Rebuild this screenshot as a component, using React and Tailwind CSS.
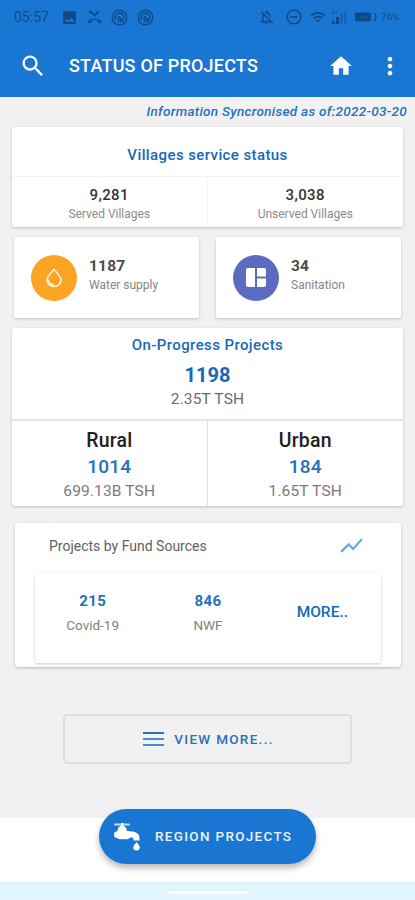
import {
  MdSearch,
  MdHome,
  MdMoreVert,
  MdShowChart,
  MdImage,
  MdOutlineNotificationsOff,
  MdRemoveCircleOutline,
  MdWifi,
} from "react-icons/md";

const villages = [
  { label: "Served Villages", value: "9,281" },
  { label: "Unserved Villages", value: "3,038" },
];

const areas = [
  { name: "Rural", count: "1014", cost: "699.13B TSH" },
  { name: "Urban", count: "184", cost: "1.65T TSH" },
];

const funds = [
  { name: "Covid-19", count: "215" },
  { name: "NWF", count: "846" },
];

/* ===============================
   ICONS
=============================== */

function MissedCallIcon() {
  return (
    <svg width="17" height="16" viewBox="0 0 17 16" fill="none" stroke="currentColor">
      <path d="M4.500 2.500l4 4 4-4" strokeWidth="1.800" />
      <path d="M3 1.500h3L3 4.500z" fill="currentColor" stroke="none" />
      <path
        d="M1 12.600c4.200-4.300 10.800-4.300 15 0l-2 2-2.700-1.400v-1.900c-1.800-.6-3.800-.6-5.600 0v1.900L3 14.600z"
        fill="currentColor"
        stroke="none"
      />
    </svg>
  );
}

function SwirlIcon() {
  return (
    <svg width="17" height="17" viewBox="0 0 17 17" fill="none" stroke="currentColor">
      <circle cx="8.500" cy="8.500" r="7.300" strokeWidth="1.400" />
      <path d="M4.700 10.700a4.400 4.400 0 1 1 7.700-.2" strokeWidth="1.500" />
      <path d="M7 7.200l5.200 5.200" strokeWidth="1.800" />
      <path d="M6.600 9.300c.3 2 1.900 3.300 4 3.200" strokeWidth="1.400" />
    </svg>
  );
}

function SignalIcon() {
  return (
    <svg width="17" height="15" viewBox="0 0 17 15" fill="currentColor">
      <path d="M1 1h2v1H2v1h1v1H1zM4.500 1h2v1h-1v2h-1z" opacity=".7" />
      <rect x="1" y="11" width="2.500" height="3" />
      <rect x="5" y="7" width="3" height="7" />
      <rect x="9.500" y="4" width="1.800" height="10" opacity=".6" />
      <rect x="13.500" y="1.500" width="1.800" height="12.500" opacity=".5" />
    </svg>
  );
}

function BatteryIcon() {
  return (
    <svg width="24" height="10" viewBox="0 0 24 10">
      <rect x="0" y=".5" width="16" height="9" rx="1.500" fill="currentColor" />
      <path d="M4 6l4-2v1.300l5-1.300-4 2.300V5z" fill="#1976d2" />
      <path d="M18.500 1c3 0 3 8 0 8" fill="none" stroke="currentColor" strokeWidth="1.200" />
    </svg>
  );
}

function DropIcon() {
  return (
    <svg width="18" height="20" viewBox="0 0 18 20" fill="none" stroke="#fff3d6">
      <path d="M9 1.500C6 5 2 8.300 2 12a7 6.500 0 0 0 14 0C16 8.300 12 5 9 1.500z" strokeWidth="1.600" />
      <path d="M3.200 11.500c.2 3 2.300 5.300 5.800 5.500" strokeWidth="1.800" />
    </svg>
  );
}

function PanelsIcon() {
  return (
    <svg width="20" height="19" viewBox="0 0 20 19" fill="#fff">
      <path d="M2 0H9v19H2a2 2 0 0 1-2-2V2a2 2 0 0 1 2-2z" />
      <path d="M11 0h7a2 2 0 0 1 2 2v6.500h-9z" />
      <path d="M11 10.500h9V17a2 2 0 0 1-2 2h-7z" />
    </svg>
  );
}

function TapIcon() {
  return (
    <svg width="28" height="30" viewBox="0 0 28 30" fill="#fff">
      <rect x="1" y="1.500" width="16" height="2" rx="1" opacity=".75" />
      <rect x="8" y="1" width="2.500" height="5" />
      <path d="M4.500 9c.3-3.200 2-5.500 4.700-5.500S13.500 5.800 14 9h1.500c1 0 1.500.5 3 .5 4.500 0 8 2.500 8 6.500v2.500h-6V17.500c0-1.500-1-2-2.500-2-1.500 0-2 1.700-4.500 1.700H6.500c-1.200 0-1.500-1.200-2.500-1.200-1.500 0-3-.5-3-3.200S2 9.500 3.500 9.500z" />
      <path d="M23.500 20c-1.300 2-3.200 3.500-3.200 5.500a3.200 3 0 0 0 6.400 0c0-2-1.900-3.500-3.200-5.500z" />
    </svg>
  );
}

/* ===============================
   CARDS
=============================== */

function ServiceCard({ icon, color, value, label }) {
  return (
    <div className="flex h-[81px] flex-1 items-center rounded-[2px] bg-white pl-[17px] shadow-[0_1px_3px_rgba(0,0,0,0.2)]">
      <div className={`flex h-[46px] w-[46px] items-center justify-center rounded-full ${color}`}>
        {icon}
      </div>
      <div className="-mt-[5px] ml-3">
        <p className="text-[15.500px] leading-[19px] font-bold tracking-[0.2px] text-[#4c4c4c]">{value}</p>
        <p className="text-xs leading-[18px] text-[#858585]">{label}</p>
      </div>
    </div>
  );
}

function App() {
  return (
    <div className="flex h-[900px] w-[415px] flex-col overflow-hidden bg-white font-['Roboto',sans-serif]">

      {/* HEADER */}

      <header className="h-[97px] shrink-0 bg-[#1976d2]">

        <div className="flex h-[34px] items-center pr-4 pl-[14px] text-[#104a86]">
          <span className="w-[48px] text-sm">05:57</span>
          <MdImage size={17} className="-ml-px" />
          <span className="ml-[8px]"><MissedCallIcon /></span>
          <span className="ml-[8px]"><SwirlIcon /></span>
          <span className="ml-[9px]"><SwirlIcon /></span>
          <div className="ml-auto flex items-center">
            <MdOutlineNotificationsOff size={17} />
            <MdRemoveCircleOutline size={18} className="ml-[10px]" />
            <MdWifi size={16} className="ml-[7px]" />
            <span className="ml-[5px]"><SignalIcon /></span>
            <span className="ml-[7px]"><BatteryIcon /></span>
            <span className="ml-[2px] text-[9.500px]">76%</span>
          </div>
        </div>

        <div className="flex h-[63px] items-center pr-[11px] pl-[19px] text-white">
          <MdSearch size={28} />
          <h1 className="ml-[22px] text-lg font-medium tracking-[0.2px]">STATUS OF PROJECTS</h1>
          <MdHome size={26} className="ml-auto" />
          <MdMoreVert size={28} className="ml-[22px]" />
        </div>

      </header>

      <main className="h-[721px] shrink-0 bg-[#f1f1f1] px-3">

        <p className="-mr-1 h-[30px] pt-[5px] text-right text-[13.500px] leading-[18px] font-medium tracking-[0.300px] whitespace-nowrap text-[#2471bd] italic">
          Information Syncronised as of:2022-03-20
        </p>

        {/* VILLAGES */}

        <section className="h-[100px] rounded-[3px] bg-white shadow-[0_1px_3px_rgba(0,0,0,0.2)]">
          <h2 className="h-[50px] border-b border-[#f2f2f2] pt-[18px] text-center text-[15px] leading-[20px] font-medium tracking-[0.400px] text-[#1769b8]">
            Villages service status
          </h2>
          <div className="grid h-[50px] grid-cols-2 divide-x divide-[#f5f5f5]">
            {villages.map((item) => (
              <div key={item.label} className="pt-[9px] text-center">
                <p className="text-[15px] leading-[19px] font-medium tracking-[0.400px] text-[#333]">{item.value}</p>
                <p className="text-xs leading-[18px] text-[#8a8a8a]">{item.label}</p>
              </div>
            ))}
          </div>
        </section>

        {/* SERVICES */}

        <section className="mt-[10px] flex gap-[17px] pr-[2px] pl-[2px]">
          <ServiceCard icon={<DropIcon />} color="bg-[#faa324]" value="1187" label="Water supply" />
          <ServiceCard icon={<PanelsIcon />} color="bg-[#5c6bc0]" value="34" label="Sanitation" />
        </section>

        {/* ON PROGRESS */}

        <section className="mt-[10px] h-[178px] rounded-[3px] bg-white shadow-[0_1px_3px_rgba(0,0,0,0.2)]">
          <div className="h-[93px] border-b-2 border-[#e5e5e5] pt-[7px] text-center">
            <h2 className="text-[15px] leading-[20px] font-medium tracking-[0.400px] text-[#1769b8]">On-Progress Projects</h2>
            <p className="mt-[7px] text-xl leading-[26px] font-bold text-[#1769b8]">1198</p>
            <p className="text-[15.500px] leading-[22px] tracking-[0.150px] text-[#6b6b6b]">2.35T TSH</p>
          </div>
          <div className="grid h-[85px] grid-cols-2 divide-x divide-[#dedede]">
            {areas.map((area) => (
              <div key={area.name} className="pt-[7px] text-center">
                <h3 className="text-[19.500px] leading-[26px] font-medium tracking-[0.200px] text-[#212121]">{area.name}</h3>
                <p className="text-[19px] leading-[26px] font-medium tracking-[0.200px] text-[#2471bd]">{area.count}</p>
                <p className="text-[15.500px] leading-[22px] tracking-[0.150px] text-[#7a7a7a]">{area.cost}</p>
              </div>
            ))}
          </div>
        </section>

        {/* FUND SOURCES */}

        <section className="mt-[17px] mr-[2px] ml-[3px] h-[144px] rounded-[3px] bg-white pr-[20px] pl-[20px] shadow-[0_1px_3px_rgba(0,0,0,0.25)]">
          <div className="flex h-[50px] items-center justify-between pr-[16px] pb-[5px] pl-[14px]">
            <h2 className="text-sm text-[#616161]">Projects by Fund Sources</h2>
            <MdShowChart size={27} className="text-[#64abe8]" />
          </div>
          <div className="grid h-[90px] grid-cols-3 rounded-[2px] bg-white shadow-[0_1px_3px_rgba(0,0,0,0.2)]">
            {funds.map((fund) => (
              <div key={fund.name} className="pt-[18px] text-center">
                <p className="text-[15px] leading-[20px] font-bold tracking-[0.400px] text-[#2471bd]">{fund.count}</p>
                <p className="mt-[3px] text-[13.500px] leading-[22px] text-[#808080]">{fund.name}</p>
              </div>
            ))}
            <button className="self-start pt-[28px] pr-[2px] text-center text-[15.500px] leading-[22px] font-medium text-[#1769b8]">
              MORE..
            </button>
          </div>
        </section>

        <button className="mx-auto mt-[47px] flex h-[50px] w-[289px] items-center justify-center gap-[10px] rounded-[4px] border-2 border-[#e0e0e0] pl-[2px] text-[#2471bd]">
          <span className="flex w-[21px] flex-col gap-[4px]">
            <span className="h-[2px] bg-[#2471bd]" />
            <span className="h-[2px] bg-[#4b8ccb]" />
            <span className="h-[2px] bg-[#4b8ccb]" />
          </span>
          <span className="text-[13.500px] font-medium tracking-[1.300px]">VIEW MORE...</span>
        </button>

      </main>

      {/* REGION BUTTON */}

      <button className="relative -mt-[9px] ml-[99px] flex h-[55px] w-[217px] shrink-0 items-center rounded-full bg-[#1976d2] pl-[14px] text-[#e8f3fd] shadow-[0_4px_6px_rgba(0,0,0,0.28)]">
        <TapIcon />
        <span className="ml-[14px] text-[13.500px] font-medium tracking-[1.300px]">REGION PROJECTS</span>
      </button>

      <footer className="mt-auto flex h-[18px] justify-center bg-[#e1f5fe] pt-[9px]">
        <div className="h-[3px] w-[82px] rounded-full bg-white" />
      </footer>

    </div>
  );
}

export default App;
